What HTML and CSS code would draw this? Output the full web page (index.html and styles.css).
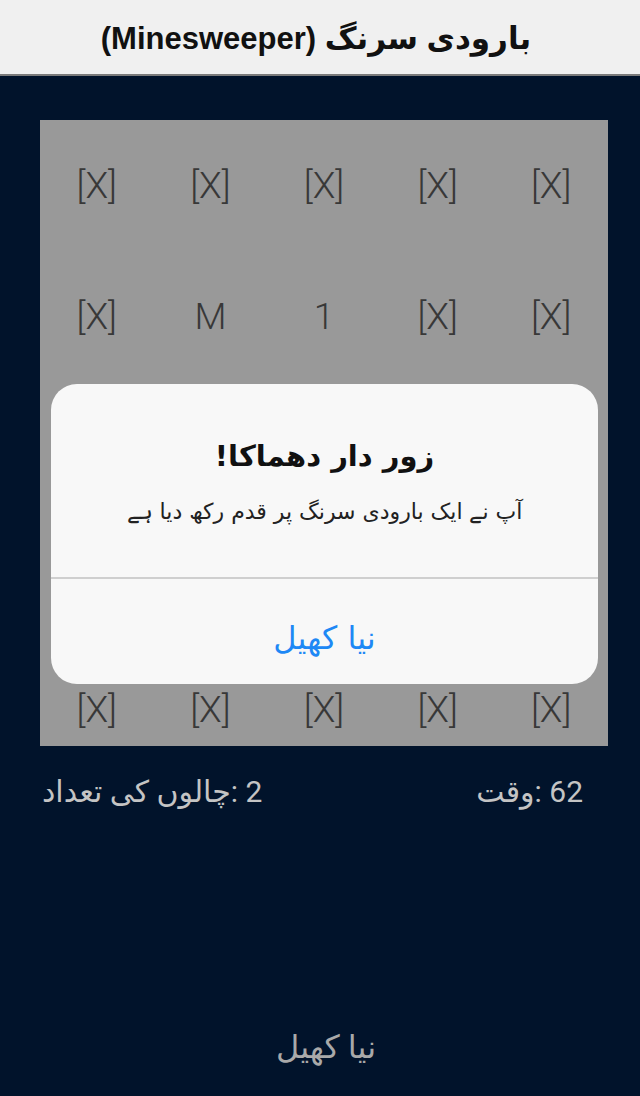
FILE: index.html
```html
<!DOCTYPE html>
<html lang="ur" dir="rtl">
<head>
<meta charset="utf-8">
<title>Minesweeper</title>
<link rel="stylesheet" href="styles.css">
</head>
<body>
<header class="app-bar">
  <h1 class="app-title">بارودی سرنگ (Minesweeper)</h1>
</header>
<main class="screen">
  <div class="board-wrap">
    <div class="board" dir="ltr">
      <span class="cell">[X]</span><span class="cell">[X]</span><span class="cell">[X]</span><span class="cell">[X]</span><span class="cell">[X]</span>
      <span class="cell">[X]</span><span class="cell">M</span><span class="cell">1</span><span class="cell">[X]</span><span class="cell">[X]</span>
      <span class="cell">[X]</span><span class="cell">[X]</span><span class="cell">[X]</span><span class="cell">[X]</span><span class="cell">[X]</span>
      <span class="cell">[X]</span><span class="cell">[X]</span><span class="cell">[X]</span><span class="cell">[X]</span><span class="cell">[X]</span>
      <span class="cell">[X]</span><span class="cell">[X]</span><span class="cell">[X]</span><span class="cell">[X]</span><span class="cell">[X]</span>
    </div>
    <div class="dialog">
      <div class="dialog-body">
        <h2 class="dialog-title">زور دار دھماکا!</h2>
        <p class="dialog-msg">آپ نے ایک بارودی سرنگ پر قدم رکھ دیا ہے</p>
      </div>
      <div class="dialog-actions">
        <button class="dialog-btn">نیا کھیل</button>
      </div>
    </div>
  </div>
  <div class="stats">
    <span class="stat" dir="ltr"><bdi>وقت</bdi>: 62</span>
    <span class="stat" dir="ltr"><bdi>چالوں کی تعداد</bdi>: 2</span>
  </div>
  <div class="footer">
    <button class="new-game">نیا کھیل</button>
  </div>
</main>
</body>
</html>
```
FILE: styles.css
```css
html, body {
  margin: 0;
  padding: 0;
}
body {
  background: #01132b;
  font-family: Roboto, "DejaVu Sans", sans-serif;
  height: 1096px;
  overflow: hidden;
}
.app-bar {
  height: 74px;
  background: #f0f0f0;
  border-bottom: 2px solid #7a7a7a;
  display: flex;
  align-items: center;
  justify-content: center;
  padding-right: 8px;
}
.app-title {
  margin: 3px 0 0;
  font-size: 31px;
  font-weight: bold;
  color: #111;
  font-family: "Liberation Sans", "DejaVu Sans", sans-serif;
}
.screen {
  padding: 44px 32px 0 40px;
  display: flex;
  flex-direction: column;
}
.board-wrap {
  position: relative;
  width: 568px;
  height: 626px;
}
.board {
  width: 568px;
  height: 626px;
  overflow: hidden;
  background: #999999;
  display: grid;
  grid-template-columns: repeat(5, 1fr);
  grid-auto-rows: 131px;
  align-content: start;
}
.cell {
  display: flex;
  align-items: center;
  justify-content: center;
  font-size: 37px;
  font-weight: 300;
  color: #383838;
  font-family: Roboto, sans-serif;
}
.dialog {
  position: absolute;
  left: 11px;
  top: 264px;
  width: 547px;
  height: 300px;
  background: #f8f8f8;
  border-radius: 26px;
  display: flex;
  flex-direction: column;
  overflow: hidden;
}
.dialog-body {
  height: 195px;
  display: flex;
  flex-direction: column;
  align-items: center;
  padding-top: 50px;
  box-sizing: border-box;
  border-bottom: 2px solid #cfcfcf;
}
.dialog-title {
  margin: 0;
  font-size: 29px;
  font-weight: bold;
  color: #111;
  font-family: "DejaVu Sans", sans-serif;
  line-height: 44px;
}
.dialog-msg {
  margin: 20px 0 0;
  font-size: 22px;
  color: #222;
  font-family: "DejaVu Sans", sans-serif;
  line-height: 28px;
}
.dialog-actions {
  flex: 1;
  display: flex;
  align-items: center;
  justify-content: center;
  padding-top: 12px;
}
.dialog-btn {
  background: none;
  border: 0;
  padding: 0;
  font-size: 32px;
  color: #1e88f5;
  font-family: "DejaVu Sans", sans-serif;
}
.stats {
  display: flex;
  justify-content: space-between;
  padding: 0 25px 0 2px;
  margin-top: 28px;
  color: #c4c4c4;
  font-size: 30px;
  line-height: 36px;
  font-family: Roboto, "DejaVu Sans", sans-serif;
}
.footer {
  margin-top: 218px;
  display: flex;
  justify-content: center;
  padding-left: 4px;
}
.new-game {
  background: none;
  border: 0;
  padding: 0;
  font-size: 32px;
  color: #a9a9a9;
  font-family: Roboto, "DejaVu Sans", sans-serif;
}
```
